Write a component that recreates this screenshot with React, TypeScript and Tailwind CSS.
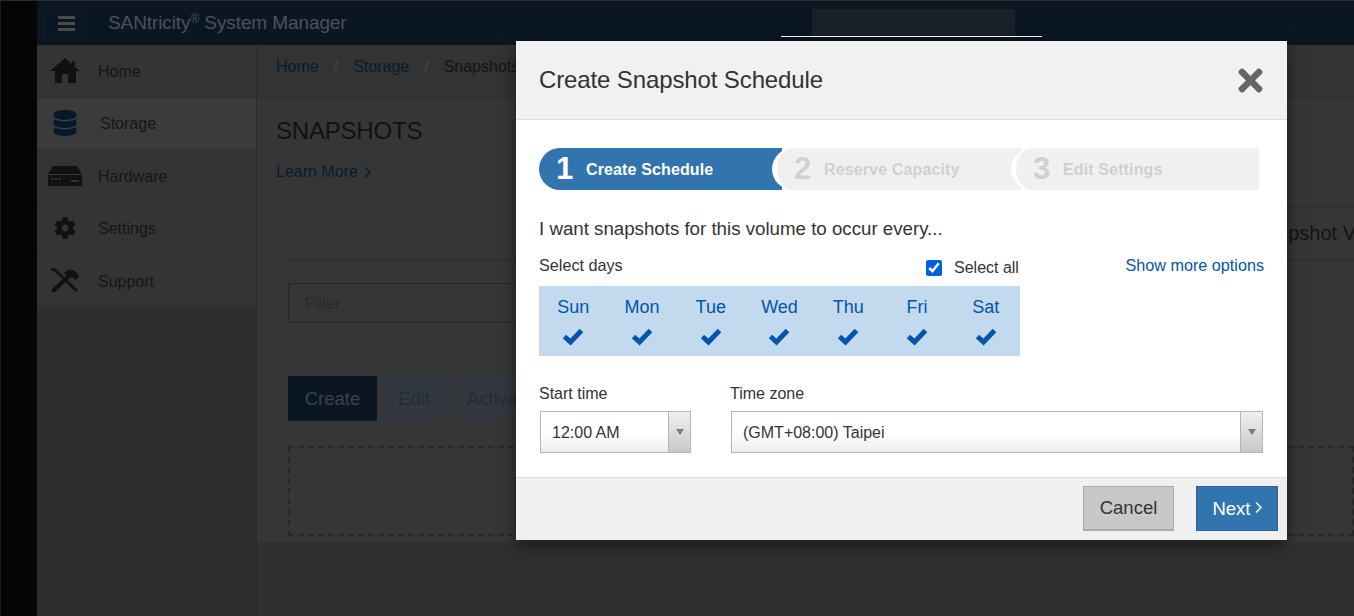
import { FaDatabase, FaCog, FaTimes } from "react-icons/fa";

const sideItems = [
  { label: "Home", active: false },
  { label: "Storage", active: true },
  { label: "Hardware", active: false },
  { label: "Settings", active: false },
  { label: "Support", active: false },
];

const days = ["Sun", "Mon", "Tue", "Wed", "Thu", "Fri", "Sat"];

function SideIcon({ name }: { name: string }) {
  if (name === "Home")
    return (
      <svg width="30" height="26" viewBox="0 0 30 26" fill="#111">
        <path d="M15 0 L22 6 V3 H25 V9 L30 13 H26 V25 H18 V16 H12 V25 H5 V13 H0 Z" />
      </svg>
    );
  if (name === "Storage") return <FaDatabase className="text-[#06192c]" size={26} />;
  if (name === "Hardware")
    return (
      <svg width="34" height="20" viewBox="0 0 34 20" fill="#111">
        <path d="M5 0 H29 L34 8 H0 Z" />
        <path d="M0 9 H34 V20 H0 Z M3 12 V14 H5 V12 Z M7 12 V14 H9 V12 Z M11 12 V14 H13 V12 Z M23 14 V16 H31 V14 Z" fillRule="evenodd" />
      </svg>
    );
  if (name === "Settings") return <FaCog className="text-[#111]" size={22} />;
  return (
    <svg width="28" height="25" viewBox="0 0 28 25" fill="none" stroke="#111">
      <path d="M2.5 22.5 L19 7" strokeWidth="4" strokeLinecap="round" />
      <path d="M13 5 Q18 -1 24 3 L28 8 L25 12 L21 9 L18 11 L15 7 Z" fill="#111" stroke="none" />
      <path d="M1 1 L4 2 L25 22" strokeWidth="3" strokeLinecap="round" />
    </svg>
  );
}

function Chevron({ className }: { className: string }) {
  return (
    <svg width="7" height="11" viewBox="0 0 7 11" fill="none" stroke="currentColor" strokeWidth="1.4" className={className}>
      <path d="M1 0.5 L6 5.5 L1 10.5" />
    </svg>
  );
}

function DayCheck() {
  return (
    <svg width="22" height="18" viewBox="0 0 22 18" fill="none" stroke="currentColor" strokeWidth="5" className="mt-[10px]">
      <path d="M2.5 8.5 L8.5 14 L19.5 2.5" />
    </svg>
  );
}

function Select({ value, className }: { value: string; className: string }) {
  return (
    <div className={`flex h-[42px] border border-[#b4b4b4] bg-gradient-to-b from-white from-55% to-[#ececec] ${className}`}>
      <div className="flex-1 pl-[11px] pt-[1px] text-[16px] leading-[40px] text-[#333]">{value}</div>
      <div className="flex w-[22px] items-center justify-center border-l border-[#b4b4b4] bg-gradient-to-b from-[#f0f0f0] to-[#c8c8c8]">
        <div className="h-0 w-0 border-x-[4px] border-t-[6px] border-x-transparent border-t-[#7d7d7d]" />
      </div>
    </div>
  );
}

export default function App() {
  return (
    <div className="relative flex h-[616px] w-[1354px] overflow-hidden border-t border-[#2b2b2b] bg-black font-['Liberation_Sans',Arial,sans-serif]">
      <div className="w-[37px] border-l border-[#1c1c1c] bg-[#050505]" />

      <div className="flex flex-1 flex-col">
        {/* top bar */}
        <div className="flex h-[44px] items-center bg-[#0a1622]">
          <div className="ml-[7px] flex h-[30px] w-[44px] flex-col items-center justify-center gap-[3px] border border-[#0c1c2c]">
            <div className="h-[3px] w-[17px] bg-[#4b4b4b]" />
            <div className="h-[3px] w-[17px] bg-[#4b4b4b]" />
            <div className="h-[3px] w-[17px] bg-[#4b4b4b]" />
          </div>
          <div className="ml-[20px] w-[240px] whitespace-nowrap text-[19px] tracking-[-0.1px] text-[#4c5259]">
            SANtricity<sup className="text-[12px]">®</sup> System Manager
          </div>
          <div className="ml-[433px] flex h-[28px] w-[261px] border-b border-white">
            <div className="ml-[31px] w-[203px] bg-[#1a2028]" />
          </div>
        </div>

        <div className="flex flex-1">
          {/* sidebar */}
          <div className="w-[220px] border-r border-[#2a2a2a] bg-[#2e2e2e]">
            {sideItems.map((item) => (
              <div
                key={item.label}
                className={`flex h-[52.5px] items-center border-b border-[#2f2f2f] ${item.active ? "bg-[#3b3b3b]" : "bg-[#343434]"}`}
              >
                <div className="flex w-[56px] justify-center">
                  <SideIcon name={item.label} />
                </div>
                <span className={`pt-[2px] text-[16px] text-[#161616] ${item.active ? "ml-[7px]" : "ml-[5px]"}`}>{item.label}</span>
              </div>
            ))}
          </div>

          {/* content behind the dialog */}
          <div className="flex flex-1 flex-col bg-[#303030]">
            <div className="h-[497px] bg-[#363636]">
              <div className="flex h-[55px] gap-[15px] bg-[#333] pl-[19px] pt-[10px] text-[16px] text-[#081c30]">
                <span>Home</span>
                <span className="text-[#444]">/</span>
                <span>Storage</span>
                <span className="text-[#444]">/</span>
                <span className="text-[#141414]">Snapshots</span>
              </div>
              <div className="pl-[19px] pt-[17px] text-[24px] leading-[28px] tracking-[-0.2px] text-[#111]">SNAPSHOTS</div>
              <div className="flex items-center gap-[6px] pl-[19px] pt-[15px] text-[16px] text-[#081c30]">
                Learn More
                <Chevron className="" />
              </div>
              <div className="ml-[31px] mt-[22px] flex h-[54px] justify-end border-b border-[#2a2a2a] text-[20px] text-[#141414]">
                <div className="flex w-[300px] items-center justify-end border-t border-[#2a2a2a]">
                  <span className="-mr-[2px] whitespace-nowrap">Snapshot V</span>
                </div>
              </div>
              <div className="ml-[31px] mt-[23px] flex h-[40px] w-[420px] items-center border border-[#262626] pl-[16px] pt-[1px] text-[16px] text-[#2a2a2a]">Filter</div>
              <div className="ml-[31px] mt-[53px] flex h-[45px] gap-[5px] text-[18.5px]">
                <div className="flex w-[89px] items-center justify-center bg-[#0a1622] text-[#3b434b]">Create</div>
                <div className="flex w-[64px] items-center justify-center bg-[#32383d] text-[#1f2d3a]">Edit</div>
                <div className="flex w-[100px] items-center bg-[#32383d] pl-[16px] text-[#1f2d3a]">Activate</div>
              </div>
              <div className="ml-[31px] mt-[25px] h-[90px] border-2 border-dashed border-[#282828]" />
            </div>
          </div>
        </div>
      </div>

      {/* dialog */}
      <div className="absolute left-[516px] top-[40px] flex h-[499px] w-[771px] flex-col bg-white shadow-[0_5px_15px_rgba(0,0,0,0.5)]">
        <div className="flex h-[79px] items-center justify-between border-b border-[#dcdcdc] bg-[#f1f1f1] pl-[23px] pr-[19px]">
          <h1 className="text-[24px] tracking-[-0.12px] text-[#333]">Create Snapshot Schedule</h1>
          <FaTimes className="text-[#666]" size={35} />
        </div>

        <div className="flex-1 pl-[23px] pr-[23px] pt-[28px]">
          <div className="flex h-[42px] w-[720px]">
            <div className="flex w-[243px] items-center rounded-l-[21px] bg-[#3274ae] pl-[17px] text-white">
              <span className="mt-[1px] w-[30px] text-[31px] font-bold">1</span>
              <span className="pt-[1px] text-[16px] font-bold tracking-[0.13px]">Create Schedule</span>
            </div>
            <div className="z-10 -ml-[10px] flex w-[249px] items-center rounded-l-[21px] border-l-[5px] border-white bg-[#f0f0f0] pl-[17px] text-[#d0d0d0]">
              <span className="mt-[1px] w-[30px] text-[31px] font-bold">2</span>
              <span className="pt-[1px] text-[16px] font-bold tracking-[0.13px]">Reserve Capacity</span>
            </div>
            <div className="z-20 -ml-[10px] flex w-[248px] items-center rounded-l-[21px] border-l-[5px] border-white bg-[#f0f0f0] pl-[17px] text-[#d0d0d0]">
              <span className="mt-[1px] w-[30px] text-[31px] font-bold">3</span>
              <span className="pt-[1px] text-[16px] font-bold tracking-[0.13px]">Edit Settings</span>
            </div>
          </div>

          <p className="mt-[28px] text-[18.7px] leading-[22px] text-[#333]">I want snapshots for this volume to occur every...</p>

          <div className="mt-[15px] flex w-[725px] items-start">
            <div className="w-[387px] text-[16.2px] leading-[20px] text-[#333]">Select days</div>
            <label className="flex items-center pt-[3px] text-[16px] leading-[20px] text-[#333]">
              <input type="checkbox" defaultChecked className="h-4 w-4 accent-[#0060df]" />
              <span className="ml-[12px]">Select all</span>
            </label>
            <a className="ml-auto text-[16.2px] leading-[20px] text-[#0255ab]">Show more options</a>
          </div>

          <div className="mt-[8px] grid h-[70px] w-[481px] grid-cols-7 bg-[#c3daee] text-[#0255ab]">
            {days.map((day) => (
              <div key={day} className="flex flex-col items-center pt-[10px]">
                <span className="text-[18px] leading-[22px]">{day}</span>
                <DayCheck />
              </div>
            ))}
          </div>

          <div className="mt-[29px] flex">
            <div className="w-[191px] text-[16px] leading-[18px] text-[#333]">
              Start time
              <Select value="12:00 AM" className="ml-px mt-[8px] w-[151px]" />
            </div>
            <div className="flex-1 text-[16px] leading-[18px] text-[#333]">
              Time zone
              <Select value="(GMT+08:00) Taipei" className="ml-px mt-[8px] w-[532px]" />
            </div>
          </div>
        </div>

        <div className="flex h-[63px] items-start justify-end border-t border-[#dcdcdc] bg-[#f0f0f0] pr-[9px] pt-[8px]">
          <button className="h-[45px] w-[91px] border border-b-2 border-[#a9a9a9] bg-[#c8c8c8] text-[18.5px] text-[#333]">Cancel</button>
          <button className="ml-[22px] flex h-[45px] w-[82px] items-center justify-center gap-[4px] border border-[#2b6297] bg-[#3274ae] text-[18.5px] text-white">
            Next
            <Chevron className="-mt-[2px]" />
          </button>
        </div>
      </div>
    </div>
  );
}
